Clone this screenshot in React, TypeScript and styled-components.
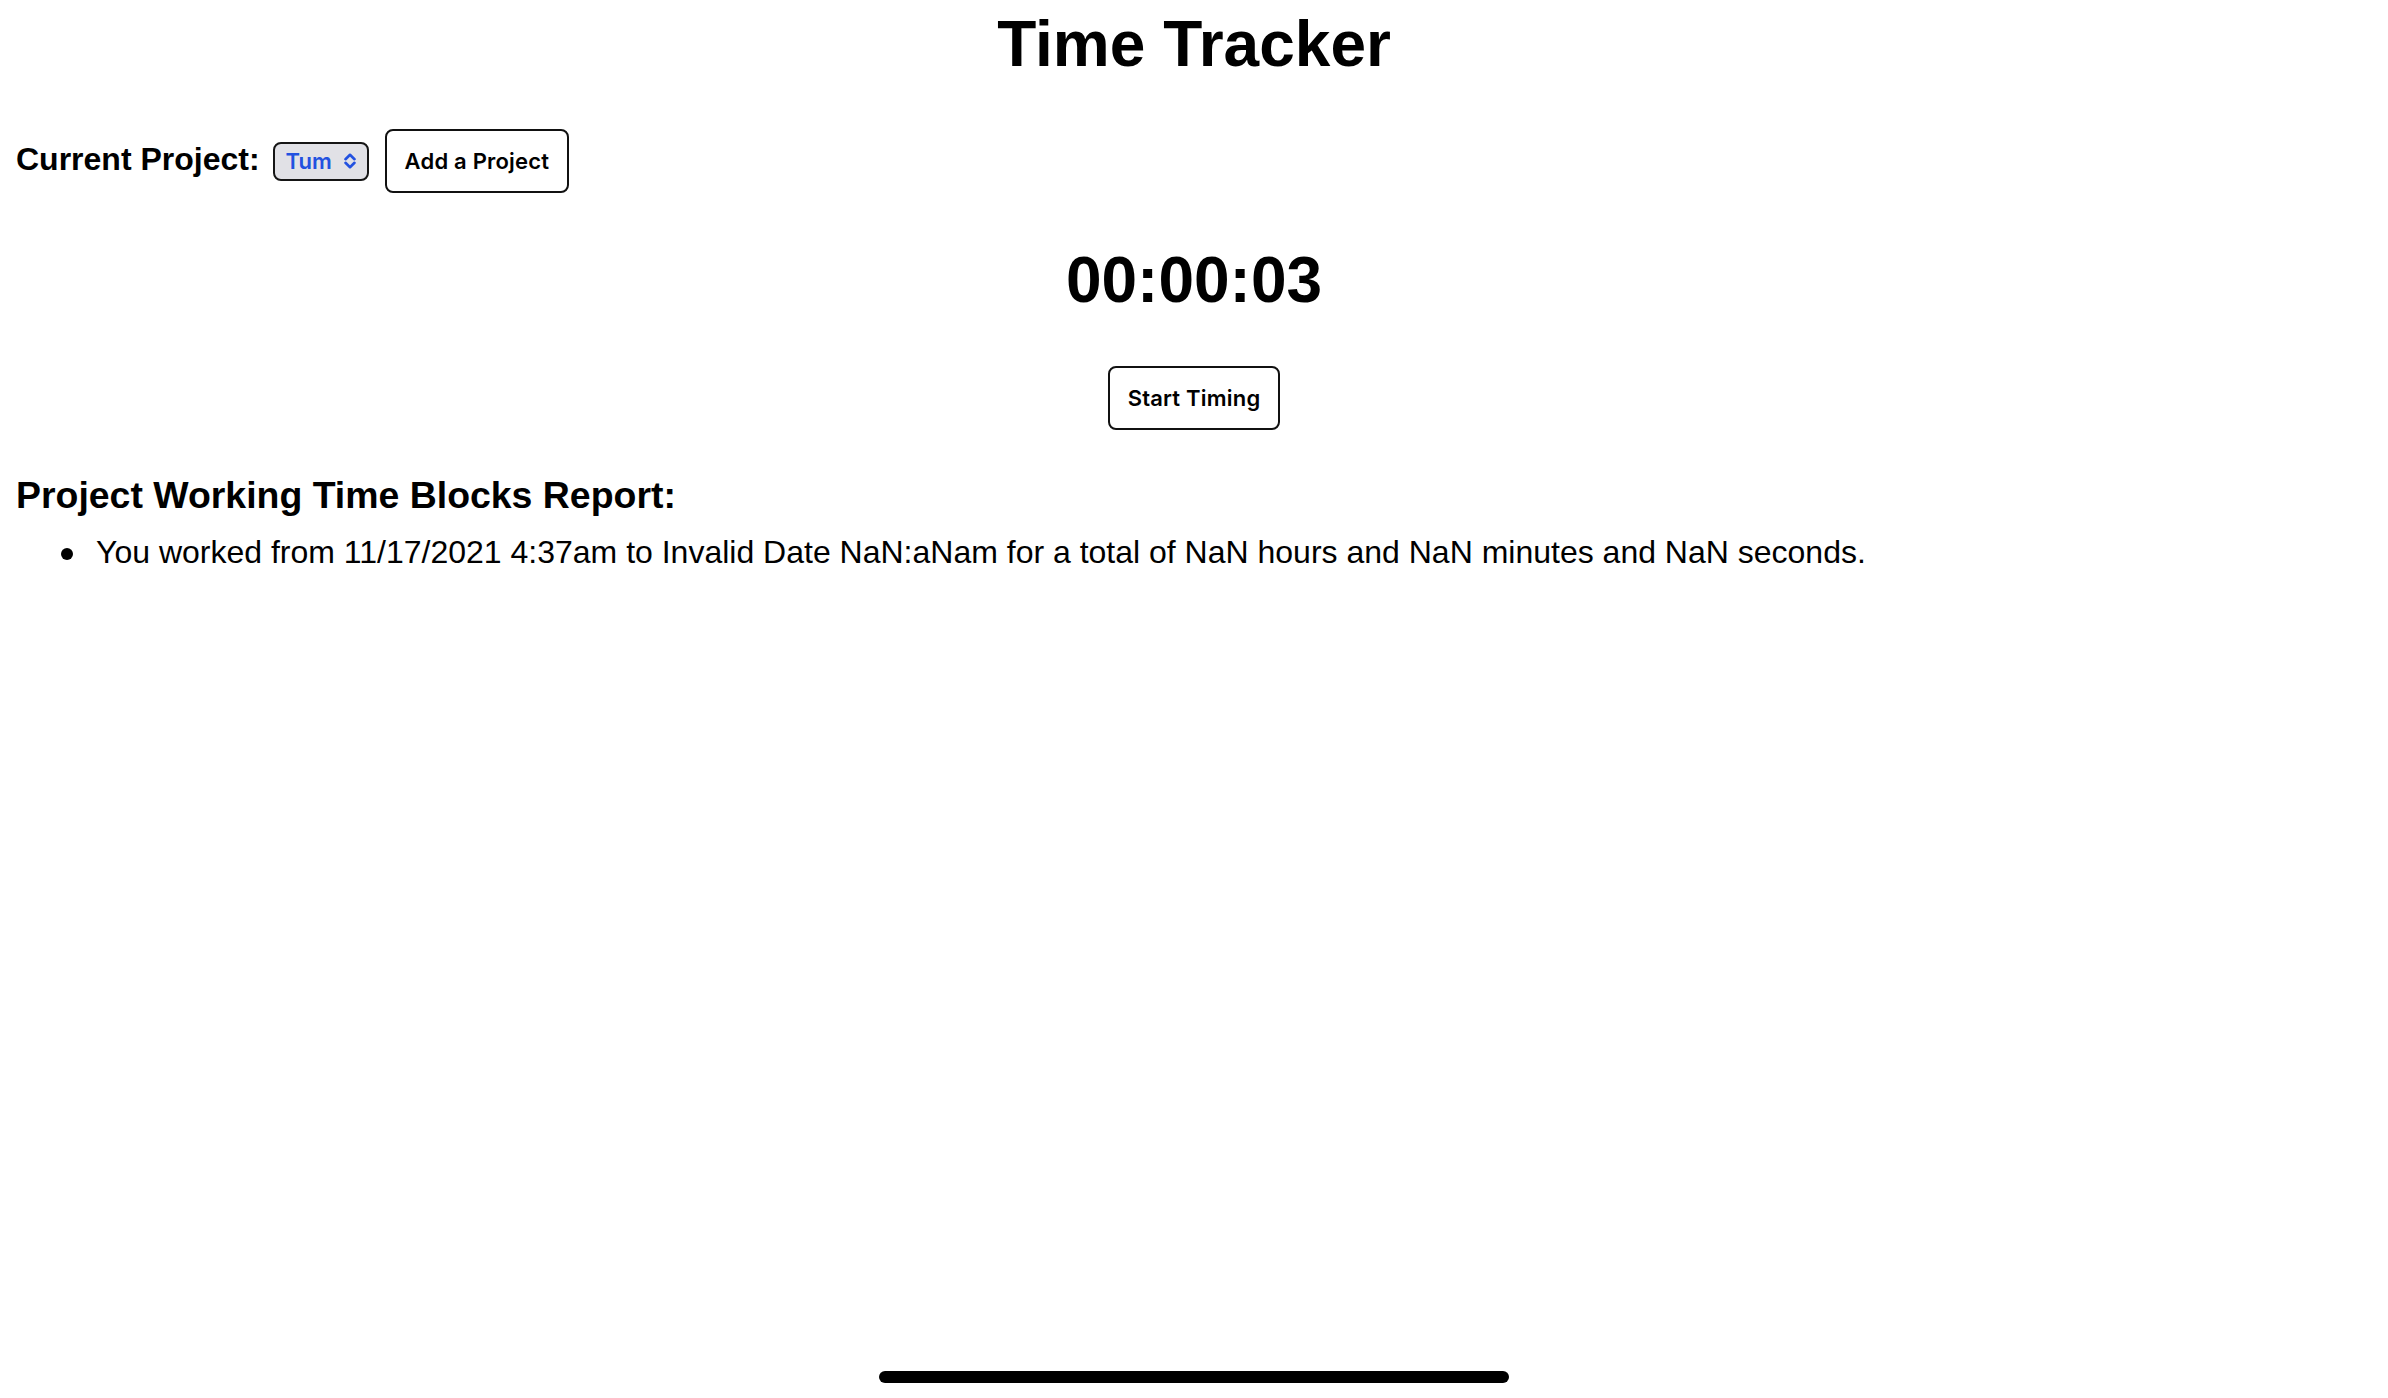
import React from "react";
import styled, { createGlobalStyle } from "styled-components";

const GlobalStyle = createGlobalStyle`
  html, body {
    margin: 0;
    padding: 0;
    background: #ffffff;
    color: #000000;
    font-family: "Liberation Sans", Arial, Helvetica, sans-serif;
  }
  #root {
    min-height: 100vh;
  }
`;

const Page = styled.main`
  display: flex;
  flex-direction: column;
  padding: 8px 16px 0 16px;
`;

const Title = styled.h1`
  margin: 0;
  font-size: 64px;
  line-height: 72px;
  font-weight: 700;
  text-align: center;
`;

const ProjectRow = styled.div`
  display: flex;
  align-items: center;
  margin-top: 49px;
`;

const RowLabel = styled.span`
  font-size: 32px;
  line-height: 37px;
  font-weight: 700;
  padding: 0 0 4px 0;
  margin-right: 13px;
`;

const SelectBox = styled.label`
  display: inline-flex;
  align-items: center;
  gap: 9px;
  height: 39px;
  box-sizing: border-box;
  padding: 0 9px 0 11px;
  border: 2px solid #151515;
  border-radius: 8px;
  background: #e1e1e6;
  margin-right: 16px;
  cursor: pointer;
`;

const NativeSelect = styled.select`
  appearance: none;
  -webkit-appearance: none;
  border: none;
  background: transparent;
  padding: 0;
  margin: 0;
  font-family: "Inter", "Noto Sans", sans-serif;
  font-size: 22px;
  font-weight: 600;
  color: #2251e0;
  outline: none;
  cursor: pointer;
`;

const Chevron = styled.svg`
  width: 16px;
  height: 16px;
  flex: none;
`;

const OutlineButton = styled.button`
  height: 64px;
  box-sizing: border-box;
  padding: 0 18px;
  border: 2px solid #111111;
  border-radius: 8px;
  background: #ffffff;
  color: #000000;
  font-family: "Inter", "Noto Sans", sans-serif;
  font-size: 22px;
  font-weight: 600;
  letter-spacing: 0.2px;
  cursor: pointer;
`;

const Clock = styled.div`
  margin-top: 51px;
  font-size: 64px;
  line-height: 72px;
  font-weight: 700;
  text-align: center;
`;

const CenterRow = styled.div`
  display: flex;
  justify-content: center;
  margin-top: 50px;
`;

const ReportHeading = styled.h3`
  margin: 44px 0 0 0;
  font-size: 37.44px;
  line-height: 43px;
  font-weight: 700;
`;

const ReportList = styled.ul`
  margin: 17px 0 0 0;
  padding-left: 80px;
  list-style: none;
`;

const ReportItem = styled.li`
  position: relative;
  font-size: 32px;
  line-height: 37px;

  &::before {
    content: "";
    position: absolute;
    left: -35px;
    top: 14px;
    width: 12px;
    height: 12px;
    border-radius: 50%;
    background: #000000;
  }
`;

const HomeIndicator = styled.div`
  position: fixed;
  left: 50%;
  bottom: 15px;
  width: 630px;
  height: 12px;
  margin-left: -315px;
  border-radius: 6px;
  background: #000000;
`;

export default function App() {
  return (
    <>
      <GlobalStyle />
      <Page>
        <Title>Time Tracker</Title>
        <ProjectRow>
          <RowLabel>Current Project:</RowLabel>
          <SelectBox>
            <NativeSelect defaultValue="Tum">
              <option value="Tum">Tum</option>
            </NativeSelect>
            <Chevron viewBox="0 0 16 16" fill="none" stroke="#2251e0" strokeWidth="2.6" strokeLinecap="round" strokeLinejoin="round">
              <path d="M3.5 6.2 L8 1.8 L12.5 6.2" />
              <path d="M3.5 9.8 L8 14.2 L12.5 9.8" />
            </Chevron>
          </SelectBox>
          <OutlineButton>Add a Project</OutlineButton>
        </ProjectRow>
        <Clock>00:00:03</Clock>
        <CenterRow>
          <OutlineButton>Start Timing</OutlineButton>
        </CenterRow>
        <ReportHeading>Project Working Time Blocks Report:</ReportHeading>
        <ReportList>
          <ReportItem>
            You worked from 11/17/2021 4:37am to Invalid Date NaN:aNam for a total of NaN hours and NaN minutes and NaN seconds.
          </ReportItem>
        </ReportList>
      </Page>
      <HomeIndicator />
    </>
  );
}
